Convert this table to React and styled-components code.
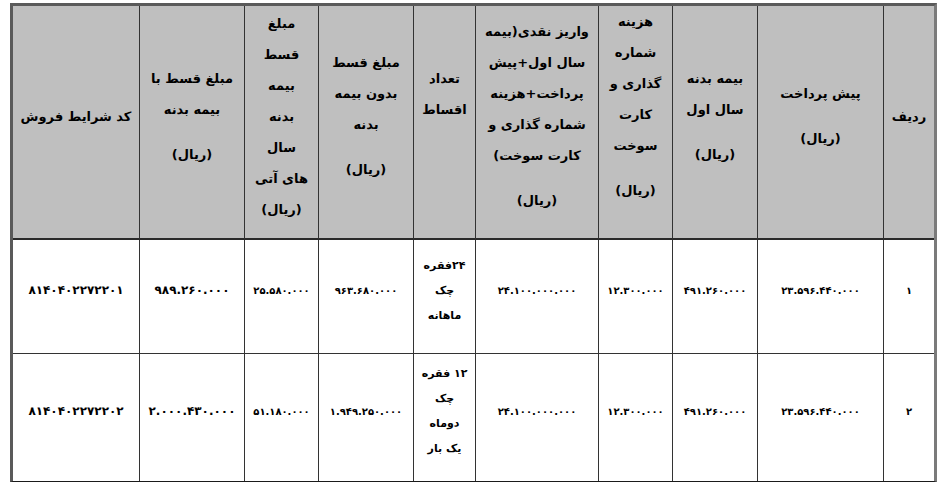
import React from "react";
import styled, { createGlobalStyle } from "styled-components";

const Global = createGlobalStyle`
  html, body { margin: 0; padding: 0; background: #ffffff; }
  body { font-family: "DejaVu Sans", "Noto Sans", sans-serif; color: #000; }
`;

const COLS = [51, 126, 85, 74, 123, 62, 95, 74, 105, 126];

const Page = styled.div`
  padding: 3px 0 0 10px;
`;

const Grid = styled.div`
  direction: rtl;
  display: grid;
  width: ${COLS.reduce((a, b) => a + b, 0)}px;
  grid-template-columns: ${COLS.map((c) => c + "px").join(" ")};
  grid-template-rows: 234px 114px 127px;
  border-top: 3px solid #5a5a5a;
  border-right: 3px solid #7a7a7a;
  border-left: 3px solid #5a5a5a;
  border-bottom: 1px solid #1a1a1a;
`;

const HeadCell = styled.div`
  box-sizing: border-box;
  background: #bfbfbf;
  border-left: ${(p) => (p.$last ? "none" : "1px solid #333")};
  border-bottom: 2px solid #2a2a2a;
  display: flex;
  flex-direction: column;
  align-items: center;
  justify-content: center;
  text-align: center;
  font-weight: bold;
  font-size: 13px;
  line-height: 31px;
  padding-bottom: 12px;
`;

const Line = styled.div`
  white-space: nowrap;
  margin-top: ${(p) => (p.$gap ? "14px" : "0")};
  margin-bottom: ${(p) => p.$after || 0}px;
  min-height: ${(p) => (p.$blank ? "31px" : "0")};
`;

const Cell = styled.div`
  box-sizing: border-box;
  background: #ffffff;
  border-left: ${(p) => (p.$last ? "none" : "1px solid #333")};
  border-bottom: ${(p) => (p.$end ? "none" : "1px solid #333")};
  display: flex;
  flex-direction: column;
  align-items: center;
  justify-content: center;
  padding-bottom: 13px;
  text-align: center;
`;

const Num = styled.span`
  direction: ltr;
  unicode-bidi: isolate;
  white-space: nowrap;
  font-weight: bold;
  font-size: ${(p) => (p.$big ? "12px" : "10px")};
`;

const Words = styled.div`
  font-size: 11px;
  font-weight: bold;
  line-height: 25px;
  white-space: nowrap;
`;

const HEAD = [
  [{ t: "ردیف" }],
  [{ t: "پیش پرداخت" }, { t: "(ریال)", gap: true }],
  [{ t: "بیمه بدنه" }, { t: "سال اول" }, { t: "(ریال)", gap: true }],
  [
    { t: "هزینه" },
    { t: "شماره" },
    { t: "گذاری و" },
    { t: "کارت" },
    { t: "سوخت" },
    { t: "(ریال)", gap: true, after: 20 },
  ],
  [
    { t: "واریز نقدی(بیمه" },
    { t: "سال اول+پیش" },
    { t: "پرداخت+هزینه" },
    { t: "شماره گذاری و" },
    { t: "کارت سوخت)" },
    { t: "(ریال)", gap: true },
  ],
  [{ t: "تعداد" }, { t: "اقساط" }, { t: "", gap: true, blank: true }],
  [{ t: "مبلغ قسط" }, { t: "بدون بیمه" }, { t: "بدنه" }, { t: "(ریال)", gap: true }],
  [
    { t: "مبلغ" },
    { t: "قسط" },
    { t: "بیمه" },
    { t: "بدنه" },
    { t: "سال" },
    { t: "های آتی" },
    { t: "(ریال)" },
  ],
  [{ t: "مبلغ قسط با" }, { t: "بیمه بدنه" }, { t: "(ریال)", gap: true }],
  [{ t: "کد شرایط فروش" }],
];

const ROWS = [
  [
    "۱",
    "۲۳.۵۹۶.۴۴۰.۰۰۰",
    "۴۹۱.۲۶۰.۰۰۰",
    "۱۲.۳۰۰.۰۰۰",
    "۲۴.۱۰۰.۰۰۰.۰۰۰",
    ["۲۴فقره", "چک", "ماهانه"],
    "۹۶۳.۶۸۰.۰۰۰",
    "۲۵.۵۸۰.۰۰۰",
    "۹۸۹.۲۶۰.۰۰۰",
    "۸۱۴۰۴۰۲۲۷۲۲۰۱",
  ],
  [
    "۲",
    "۲۳.۵۹۶.۴۴۰.۰۰۰",
    "۴۹۱.۲۶۰.۰۰۰",
    "۱۲.۳۰۰.۰۰۰",
    "۲۴.۱۰۰.۰۰۰.۰۰۰",
    ["۱۲ فقره", "چک", "دوماه", "یک بار"],
    "۱.۹۴۹.۲۵۰.۰۰۰",
    "۵۱.۱۸۰.۰۰۰",
    "۲.۰۰۰.۴۳۰.۰۰۰",
    "۸۱۴۰۴۰۲۲۷۲۲۰۲",
  ],
];

export default function App() {
  return (
    <Page>
      <Global />
      <Grid>
        {HEAD.map((lines, i) => (
          <HeadCell key={"h" + i} $last={i === HEAD.length - 1}>
            {lines.map((l, j) => (
              <Line key={j} $gap={l.gap} $blank={l.blank} $after={l.after}>
                {l.t}
              </Line>
            ))}
          </HeadCell>
        ))}
        {ROWS.map((row, r) =>
          row.map((v, i) => (
            <Cell key={r + "-" + i} $last={i === row.length - 1} $end={r === ROWS.length - 1}>
              {Array.isArray(v) ? (
                v.map((w, k) => <Words key={k}>{w}</Words>)
              ) : (
                <Num $big={i >= 8}>{v}</Num>
              )}
            </Cell>
          ))
        )}
      </Grid>
    </Page>
  );
}
